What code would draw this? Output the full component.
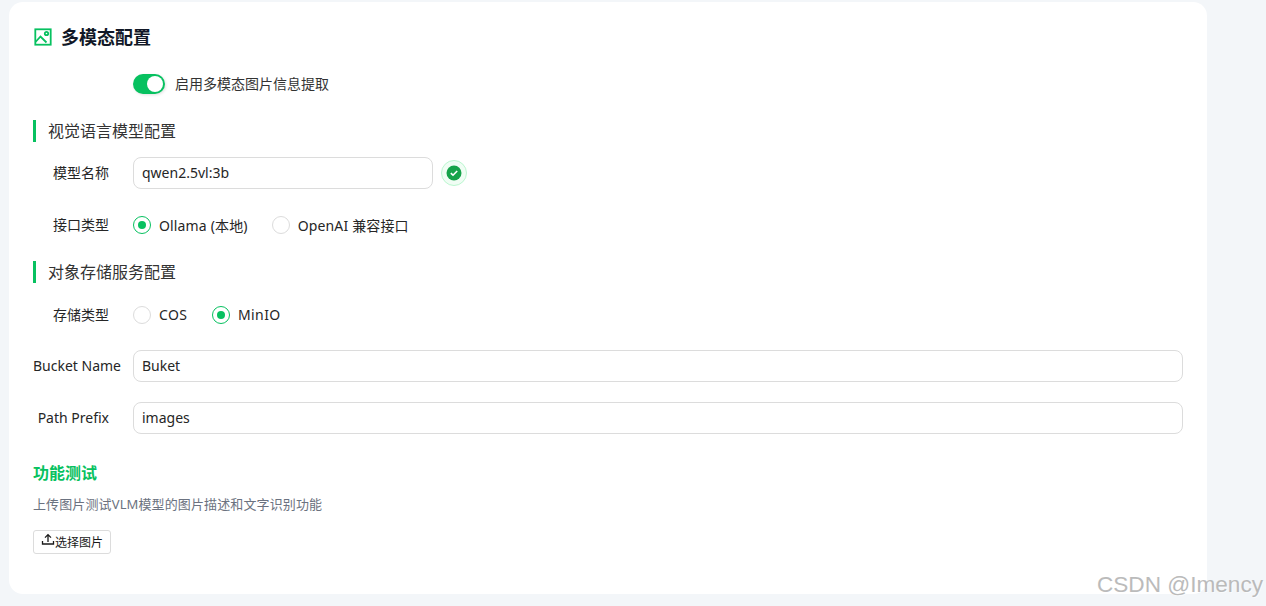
<script>
  const ok = true;
</script>

<div class="page">
  <section class="card">
    <h2 class="title">
      <svg class="title-icon" width="18" height="18" viewBox="0 0 18 18" fill="none" stroke="#07c160" stroke-width="1.8">
        <rect x="1.3" y="1.3" width="15.4" height="15.4" />
        <path d="M1.5 14 L6.5 8.5 L12.5 14.5" />
        <circle cx="12.5" cy="5.5" r="1.7" />
      </svg>
      多模态配置
    </h2>

    <div class="row switch-row">
      <span class="label"></span>
      <span class="switch"><span class="knob"></span></span>
      <span class="switch-text">启用多模态图片信息提取</span>
    </div>

    <h3 class="section first">视觉语言模型配置</h3>

    <div class="row model-row">
      <span class="label">模型名称</span>
      <div class="input short">qwen2.5vl:3b</div>
      <span class="status">
        <svg width="16" height="16" viewBox="0 0 16 16">
          <circle cx="8" cy="8" r="7.5" fill="#16a34a" />
          <path d="M4.8 8.2 L7 10.2 L11.2 6" fill="none" stroke="#fff" stroke-width="1.6" />
        </svg>
      </span>
    </div>

    <div class="row radios iface">
      <span class="label">接口类型</span>
      <span class="radio on"></span><span class="radio-text">Ollama (本地)</span>
      <span class="radio"></span><span class="radio-text">OpenAI 兼容接口</span>
    </div>

    <h3 class="section second">对象存储服务配置</h3>

    <div class="row radios storage">
      <span class="label">存储类型</span>
      <span class="radio"></span><span class="radio-text">COS</span>
      <span class="radio on"></span><span class="radio-text">MinIO</span>
    </div>

    <div class="row field bucket">
      <span class="label">Bucket Name</span>
      <div class="input">Buket</div>
    </div>

    <div class="row field prefix">
      <span class="label">Path Prefix</span>
      <div class="input">images</div>
    </div>

    <h3 class="test-title">功能测试</h3>
    <p class="test-desc">上传图片测试VLM模型的图片描述和文字识别功能</p>

    <button class="upload" type="button">
      <svg width="14" height="14" viewBox="0 0 14 14" fill="none" stroke="#1a1a1a" stroke-width="1.3">
        <path d="M7 9 V2 M4 4.6 L7 1.6 L10 4.6" />
        <path d="M1.5 8 V11 H12.5 V8" />
      </svg>选择图片
    </button>
  </section>
  <div class="watermark">CSDN @Imency</div>
</div>

<style>
  :global(body) {
    margin: 0;
    background: #f3f6f9;
  }
  .page {
    position: relative;
    height: 606px;
    overflow: hidden;
    padding: 2px 59px 12px 9px;
    box-sizing: border-box;
    font-family: "Noto Sans", "Noto Sans CJK SC", sans-serif;
    color: #262626;
    font-size: 14px;
  }
  .card {
    background: #fff;
    border-radius: 14px;
    height: 592px;
    box-sizing: border-box;
    padding: 23px 24px 0;
  }
  .title {
    margin: 0;
    display: flex;
    align-items: center;
    gap: 9px;
    font-size: 18px;
    line-height: 24px;
    font-weight: 700;
    color: #111827;
    padding-left: 1px;
  }
  .row {
    display: flex;
    align-items: center;
  }
  .label {
    width: 100px;
    flex: none;
    box-sizing: border-box;
    padding-right: 24px;
    padding-bottom: 2px;
    text-align: right;
    white-space: nowrap;
    font-size: 14px;
    color: #262626;
  }
  .switch-row {
    margin-top: 23px;
    height: 24px;
  }
  .switch {
    width: 32px;
    height: 20px;
    border-radius: 10px;
    background: #07c160;
    position: relative;
    flex: none;
    box-shadow: 1px 1px 3px rgba(0,0,0,.12);
  }
  .knob {
    position: absolute;
    top: 2px;
    right: 2px;
    width: 16px;
    height: 16px;
    border-radius: 50%;
    background: #fff;
  }
  .switch-text {
    margin-left: 10px;
    padding-bottom: 2px;
    font-size: 14px;
    color: #333;
  }
  .section {
    margin: 0;
    border-left: 3px solid #07c160;
    padding-left: 12px;
    font-size: 16px;
    font-weight: 400;
    line-height: 22px;
    color: #333;
  }
  .section.first { margin-top: 24px; }
  .section.second { margin-top: 25px; }
  .input {
    flex: 1;
    height: 32px;
    box-sizing: border-box;
    border: 1px solid #dcdcdc;
    border-radius: 8px;
    padding: 0 8px;
    line-height: 29px;
    font-size: 14px;
    color: #262626;
  }
  .input.short {
    flex: none;
    width: 300px;
  }
  .model-row {
    margin-top: 15px;
    height: 32px;
  }
  .status {
    margin-left: 8px;
    width: 26px;
    height: 26px;
    border-radius: 50%;
    background: #f0fdf4;
    border: 1px solid #bbf7d0;
    box-sizing: border-box;
    display: flex;
    align-items: center;
    justify-content: center;
  }
  .radios { height: 22px; }
  .iface { margin-top: 25px; }
  .storage { margin-top: 21px; }
  .radio {
    width: 18px;
    height: 18px;
    box-sizing: border-box;
    border: 1px solid #dcdcdc;
    border-radius: 50%;
    flex: none;
    position: relative;
  }
  .radio.on {
    border-color: #07c160;
  }
  .radio.on::after {
    content: "";
    position: absolute;
    left: 4px;
    top: 4px;
    width: 8px;
    height: 8px;
    border-radius: 50%;
    background: #07c160;
  }
  .radio-text {
    margin-left: 8px;
    margin-right: 24px;
    padding-bottom: 2px;
    font-size: 14px;
    letter-spacing: .15px;
  }
  .iface .radio-text { padding-bottom: 0; }
  .storage .radio-text {
    letter-spacing: .4px;
    margin-right: 24.6px;
  }
  .bucket { margin-top: 24px; height: 32px; }
  .prefix { margin-top: 20px; height: 32px; }
  .test-title {
    margin: 27px 0 0;
    font-size: 16px;
    line-height: 24px;
    font-weight: 700;
    color: #07c160;
  }
  .test-desc {
    margin: 9px 0 0;
    font-size: 13px;
    line-height: 20px;
    letter-spacing: .12px;
    color: #6b7280;
  }
  .upload {
    margin-top: 16px;
    display: flex;
    align-items: center;
    width: 78px;
    height: 24px;
    padding: 0 7px;
    box-sizing: border-box;
    background: #fff;
    border: 1px solid #dcdcdc;
    border-radius: 3px;
    font: inherit;
    font-size: 12px;
    color: #1a1a1a;
  }
  .upload svg { margin-top: -4px; }
  .watermark {
    position: absolute;
    right: 3px;
    bottom: 8px;
    font-family: "Liberation Sans", sans-serif;
    font-size: 22.6px;
    line-height: 26px;
    color: #b4b4b4;
    text-shadow: 1px 1px 1px rgba(255,255,255,.8);
    opacity: .9;
  }
</style>
